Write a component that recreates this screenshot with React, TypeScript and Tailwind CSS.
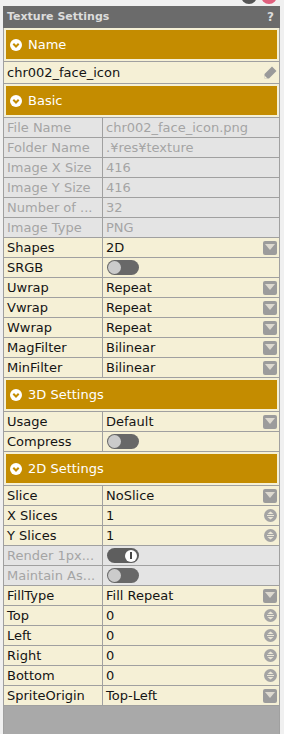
import React from "react";

const FONT = { fontFamily: '"DejaVu Sans", Verdana, sans-serif' };

function Dropdown() {
  return (
    <svg width="14" height="14" viewBox="0 0 14 14">
      <rect x="0" y="0" width="14" height="14" rx="2" fill="#9c9c9c" />
      <polygon points="2,3 12,3 7,9" fill="#dedad0" />
    </svg>
  );
}

function Spinner() {
  return (
    <svg width="13" height="13" viewBox="0 0 13 13">
      <circle cx="6.5" cy="6.5" r="6.5" fill="#a4a4a4" />
      <polygon points="3.5,5 9.5,5 6.5,2.5" fill="#ece8d8" />
      <polygon points="3.5,8 9.5,8 6.5,10.5" fill="#ece8d8" />
      <rect x="3" y="6" width="7" height="1" fill="#ece8d8" />
    </svg>
  );
}

function Pencil() {
  return (
    <svg width="15" height="15" viewBox="0 0 15 15">
      <polygon points="9,1.5 13.5,6 6,13.5 1.5,13.5 1.5,9" fill="#9a9a9a" />
      <polygon points="1.5,13.5 1.5,10.5 4.5,13.5" fill="#f5f0d6" />
    </svg>
  );
}

function Chevron() {
  return (
    <svg width="12" height="12" viewBox="0 0 12 12">
      <circle cx="6" cy="6" r="6" fill="#ffffff" />
      <polyline points="3.3,4.8 6,7.5 8.7,4.8" fill="none" stroke="#c48c00" strokeWidth="2" />
    </svg>
  );
}

function Toggle({ on }: { on?: boolean }) {
  if (on) {
    return (
      <div className="ml-[1px] flex h-[15px] w-[32px] items-center justify-end rounded-full bg-[#5e5e5e] pr-[2px]">
        <div className="flex h-[12px] w-[12px] items-center justify-center rounded-full bg-white">
          <div className="h-[7px] w-[2px] bg-[#444]" />
        </div>
      </div>
    );
  }
  return (
    <div className="ml-[1px] flex h-[15px] w-[32px] items-center rounded-full bg-[#686868] pl-[1px]">
      <div className="h-[13px] w-[13px] rounded-full bg-[#cbcbcb]" />
    </div>
  );
}

type Kind = "text" | "drop" | "spin" | "toggle" | "toggleOn";

function Row({
  label,
  value,
  kind = "text",
  disabled,
}: {
  label: string;
  value?: string;
  kind?: Kind;
  disabled?: boolean;
}) {
  return (
    <div
      className={
        disabled
          ? "flex h-[20px] border-b border-[#a0a0a0] bg-[#e4e4e4] text-[#a4a4a4]"
          : "flex h-[20px] border-b border-[#a0a0a0] bg-[#f5f0d6] text-[#141414]"
      }
    >
      <div className="w-[99px] shrink-0 overflow-hidden whitespace-nowrap border-r border-[#a0a0a0] pl-[3px] text-[13px] leading-[19px]">
        {label}
      </div>
      <div className="flex flex-1 items-center justify-between pl-[3px] pr-[2px]">
        {kind === "toggle" ? (
          <Toggle />
        ) : kind === "toggleOn" ? (
          <Toggle on />
        ) : (
          <span className="whitespace-nowrap text-[13px] leading-[19px]">{value}</span>
        )}
        {kind === "drop" && <Dropdown />}
        {kind === "spin" && <Spinner />}
      </div>
    </div>
  );
}

function Header({ title }: { title: string }) {
  return (
    <div className="border-b border-[#a0a0a0] bg-[#f5f0d6] px-[2px] py-[2px]">
      <div className="flex h-[29px] items-center gap-[6px] bg-[#c48c00] pl-[4px] text-[13px] text-white">
        <Chevron />
        <span>{title}</span>
      </div>
    </div>
  );
}

export default function App() {
  return (
    <div className="flex h-[734px] w-[284px] flex-col overflow-hidden bg-[#f0f0f0]" style={FONT}>
      <div className="flex h-[6px] shrink-0 justify-end gap-[4px] overflow-hidden pr-[7px]">
        <div className="-mt-[12px] h-[16px] w-[16px] rounded-full bg-[#555555]" />
        <div className="-mt-[12px] h-[16px] w-[16px] rounded-full bg-[#e0607e]" />
      </div>
      <div className="ml-[3px] flex w-[277px] flex-1 flex-col">
        <div className="flex h-[22px] shrink-0 items-center justify-between bg-[#6b6b6b] pl-[4px] pr-[6px] text-[11px] font-bold text-[#dcdcdc]">
          <span>Texture Settings</span>
          <span className="text-[12px]">?</span>
        </div>
        <div className="flex flex-1 flex-col border-x border-[#a0a0a0] bg-[#a9a9a9]">
          <Header title="Name" />
          <div className="flex h-[22px] items-center justify-between border-b border-[#a0a0a0] bg-[#f5f0d6] pl-[3px] pr-[1px] text-[13px] text-[#141414]">
            <span>chr002_face_icon</span>
            <Pencil />
          </div>
          <Header title="Basic" />
          <Row label="File Name" value="chr002_face_icon.png" disabled />
          <Row label="Folder Name" value=".¥res¥texture" disabled />
          <Row label="Image X Size" value="416" disabled />
          <Row label="Image Y Size" value="416" disabled />
          <Row label="Number of ..." value="32" disabled />
          <Row label="Image Type" value="PNG" disabled />
          <Row label="Shapes" value="2D" kind="drop" />
          <Row label="SRGB" kind="toggle" />
          <Row label="Uwrap" value="Repeat" kind="drop" />
          <Row label="Vwrap" value="Repeat" kind="drop" />
          <Row label="Wwrap" value="Repeat" kind="drop" />
          <Row label="MagFilter" value="Bilinear" kind="drop" />
          <Row label="MinFilter" value="Bilinear" kind="drop" />
          <Header title="3D Settings" />
          <Row label="Usage" value="Default" kind="drop" />
          <Row label="Compress" kind="toggle" />
          <Header title="2D Settings" />
          <Row label="Slice" value="NoSlice" kind="drop" />
          <Row label="X Slices" value="1" kind="spin" />
          <Row label="Y Slices" value="1" kind="spin" />
          <Row label="Render 1px..." kind="toggleOn" disabled />
          <Row label="Maintain As..." kind="toggle" disabled />
          <Row label="FillType" value="Fill Repeat" kind="drop" />
          <Row label="Top" value="0" kind="spin" />
          <Row label="Left" value="0" kind="spin" />
          <Row label="Right" value="0" kind="spin" />
          <Row label="Bottom" value="0" kind="spin" />
          <Row label="SpriteOrigin" value="Top-Left" kind="drop" />
        </div>
      </div>
    </div>
  );
}
